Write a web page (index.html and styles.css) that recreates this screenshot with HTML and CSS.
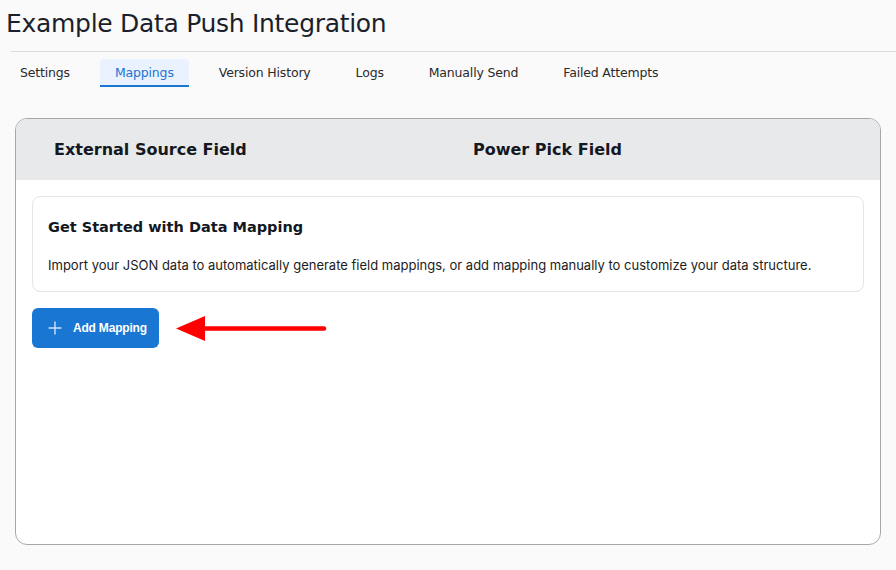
FILE: index.html
```html
<html>
	<head>
		<link rel="stylesheet" href="styles.css">
	</head>
	<body>
		<h1 class="title">Example Data Push Integration</h1>
		<nav class="tabs">
			<div class="tab">Settings</div>
			<div class="tab active">Mappings</div>
			<div class="tab">Version History</div>
			<div class="tab">Logs</div>
			<div class="tab">Manually Send</div>
			<div class="tab">Failed Attempts</div>
		</nav>
		<div class="card">
			<div class="card-head">
				<div class="col">External Source Field</div>
				<div class="col">Power Pick Field</div>
			</div>
			<div class="card-body">
				<div class="intro">
					<div class="intro-title">Get Started with Data Mapping</div>
					<div class="intro-text">Import your JSON data to automatically generate field mappings, or add mapping manually to customize your data structure.</div>
				</div>
				<div class="actions">
					<button class="add-btn">
						<svg width="14" height="14" viewBox="0 0 14 14">
							<path d="M7 1v12M1 7h12" stroke="#cfe2f7" stroke-width="1.4" stroke-linecap="round"/>
						</svg>
						Add Mapping
					</button>
					<!-- pointer to the button -->
					<svg class="arrow" width="152" height="28" viewBox="0 0 152 28">
						<path d="M28 13.5H148" stroke="#ff0000" stroke-width="4.5" stroke-linecap="round"/>
						<polygon points="0,13.5 29,1 29,26" fill="#ff0000"/>
					</svg>
				</div>
			</div>
		</div>
	</body>
</html>
```

FILE: styles.css
```css
body{
	margin: 0;
	background: #fafafa;
	color: #1a1f2b;
	font-family: "DejaVu Sans", sans-serif;
}
.title{
	margin: 0 0 0 10px;
	padding: 9px 0 0 0;
	height: 52px;
	line-height: 30px;
	font-size: 25px;
	font-weight: normal;
	letter-spacing: -0.3px;
	box-sizing: border-box;
	border-bottom: 1px solid #dedede;
	text-indent: -4px;
}
.tabs{
	display: flex;
	margin-top: 7px;
	padding-left: 5px;
	height: 28px;
}
.tab{
	padding: 0 15px;
	margin-right: 15px;
	font-size: 12.5px;
	line-height: 27px;
	color: #2a2a2a;
	border-bottom: 2px solid transparent;
	border-radius: 4px 4px 0 0;
	letter-spacing: -0.17px;
}
.tab.active{
	background: #e9f2fe;
	color: #1f73d1;
	border-bottom-color: #1976d2;
}
.card{
	margin: 31px 15px 0 15px;
	height: 427px;
	box-sizing: border-box;
	border: 1px solid #a5a8ab;
	border-radius: 12px;
	background: #fff;
	overflow: hidden;
}
.card-head{
	display: flex;
	height: 61px;
	align-items: center;
	background: #e8e9eb;
	font-size: 16px;
	font-weight: bold;
	color: #141821;
	padding-left: 38px;
}
.col{
	width: 419px;
	flex-shrink: 0;
}
.card-body{
	padding: 16px 16px 0 16px;
}
.intro{
	border: 1px solid #e4e5e6;
	border-radius: 8px;
	height: 96px;
	box-sizing: border-box;
	padding: 22px 15px 0 15px;
}
.intro-title{
	font-size: 14.5px;
	font-weight: bold;
	color: #141821;
	margin-bottom: 22px;
}
.intro-text{
	font-family: Inter, "Liberation Sans", sans-serif;
	font-size: 13px;
	color: #1c1c1c;
}
.actions{
	display: flex;
	align-items: center;
	margin-top: 16px;
}
.add-btn{
	display: flex;
	align-items: center;
	gap: 11px;
	height: 40px;
	width: 127px;
	padding: 0 0 0 16px;
	border: none;
	border-radius: 6px;
	background: #1976d2;
	color: #fff;
	font-family: "Liberation Sans", sans-serif;
	font-weight: bold;
	font-size: 12px;
	letter-spacing: -0.2px;
}
.arrow{
	margin-left: 17px;
	margin-top: 1px;
}
```
